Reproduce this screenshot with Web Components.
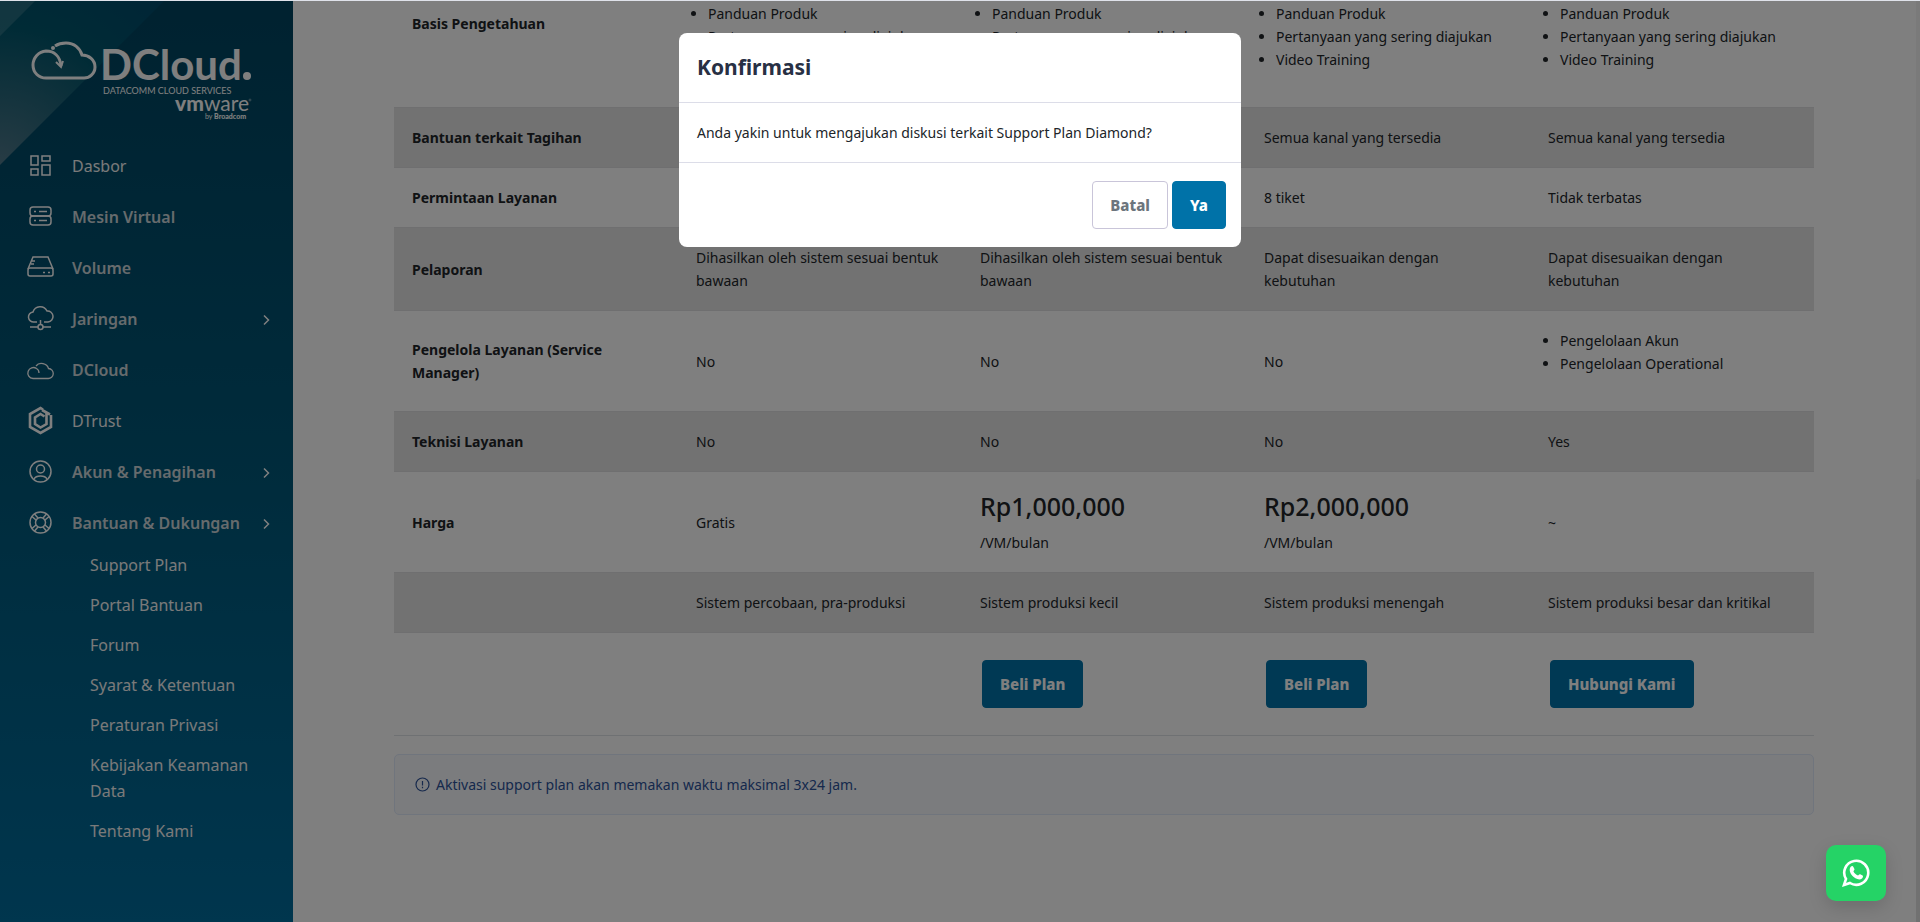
<!DOCTYPE html>
<html lang="id">
<head>
<meta charset="utf-8">
<title>Support Plan - DCloud</title>
<style>
	body{
		margin: 0;
		font: 14px/23px "Noto Sans", "Open Sans", sans-serif;
		color: #212529;
		background: #fff;
		--primary: #0072a8;
	}
</style>
</head>
<body>

<app-shell>
	<side-nav slot="nav">
		<nav-item icon="grid" plain>Dasbor</nav-item>
		<nav-item icon="server">Mesin Virtual</nav-item>
		<nav-item icon="drive">Volume</nav-item>
		<nav-item icon="network" arrow>Jaringan</nav-item>
		<nav-item icon="cloud">DCloud</nav-item>
		<nav-item icon="trust" plain>DTrust</nav-item>
		<nav-item icon="user" arrow>Akun &amp; Penagihan</nav-item>
		<nav-item icon="help" arrow>Bantuan &amp; Dukungan</nav-item>
		<nav-sub>Support Plan</nav-sub>
		<nav-sub>Portal Bantuan</nav-sub>
		<nav-sub>Forum</nav-sub>
		<nav-sub>Syarat &amp; Ketentuan</nav-sub>
		<nav-sub>Peraturan Privasi</nav-sub>
		<nav-sub>Kebijakan Keamanan Data</nav-sub>
		<nav-sub>Tentang Kami</nav-sub>
	</side-nav>
	<plan-table></plan-table>
	<info-note>Aktivasi support plan akan memakan waktu maksimal 3x24 jam.</info-note>
</app-shell>

<confirm-modal>
	<span slot="title">Konfirmasi</span>
	Anda yakin untuk mengajukan diskusi terkait Support Plan Diamond?
	<action-button slot="actions" outline>Batal</action-button>
	<action-button slot="actions">Ya</action-button>
</confirm-modal>

<wa-button></wa-button>

<script>
const icons = {
	grid: '<path d="M5 5h7v9H5zM16 5h8v5h-8zM16 14h8v10h-8zM5 18h7v6H5z"/>',
	server: '<rect x="4" y="5" width="21" height="9" rx="3"/><rect x="4" y="14" width="21" height="9" rx="3"/><path d="M8 9.500h2M13 9.500h8M8 18.500h2M13 18.500h8"/>',
	drive: '<path d="M2 16 7 4h15l5 12M9 8H6M8 11H5"/><rect x="2" y="15" width="25" height="8" rx="2"/><path d="M17 19.500h2M22 19.500h2"/>',
	network: '<path d="M11 18H8a5 5 0 0 1-1-10 7.500 7.500 0 0 1 14-1 5.500 5.500 0 0 1 1 11h-4M14.500 16v4M4 23h8M17 23h8"/><circle cx="14.500" cy="23" r="2.500"/>',
	cloud: '<path stroke-width="1.300" d="M10 11c3.500-4.500 11-2.500 12.500 2.500a5 5 0 0 1-.5 10H7a5.500 5.500 0 1 1 3.500-10c1.500.8 2.500 2 2.500 4.500"/>',
	trust: '<path stroke-width="2.600" d="M17 3.500 14.500 2 4 8v13l10.500 6L25 21V9"/><path stroke-width="2.600" d="M18.500 10.500 14.500 8 9 11.500v6.500l5.500 3.500 6-3.500V7.500M16 4l8 4.500"/>',
	user: '<circle cx="14.500" cy="14.500" r="10.500"/><circle cx="14.500" cy="12" r="4"/><path d="M8 22c2-4 11-4 13 0"/>',
	help: '<circle cx="14.500" cy="14.500" r="10.500"/><circle cx="14.500" cy="14.500" r="5"/><path d="M6 8.500l4 3.500M8.500 6l3.500 4M23 8.500 19 12M20.500 6 17 10M6 20.500l4-3.500M8.500 23l3.500-4M23 20.500 19 17M20.500 23 17 19"/>'
};

class AppShell extends HTMLElement{
	constructor(){
		super();
		this.attachShadow({mode: 'open'});
		this.shadowRoot.innerHTML = `
			<style>
				:host{
					display: flex;
					height: 100vh;
					overflow: hidden;
				}
				main{
					flex: 1;
					min-width: 0;
					padding: 0 102px 0 101px;
				}
				.track{
					display: flex;
					flex-direction: column;
					width: 4px;
					background: #f5f5f5;
				}
				.thumb{
					flex: 1;
					margin-top: 52vh;
					border-radius: 2px 2px 0 0;
					background: #e2e2e2;
				}
			</style>
			<slot name="nav"></slot>
			<main><slot></slot></main>
			<div class="track"><div class="thumb"></div></div>
		`;
	}
}

class SideNav extends HTMLElement{
	constructor(){
		super();
		this.attachShadow({mode: 'open'});
		this.shadowRoot.innerHTML = `
			<style>
				:host{
					position: relative;
					z-index: 0;
					display: block;
					flex: none;
					width: 293px;
					font-size: 16px;
					line-height: 26px;
					color: #fff;
					background: linear-gradient(180deg, #004460, #005778 50%, #006c9c);
				}
				/* light wedge in the corner behind the logo */
				:host::before{
					content: "";
					position: absolute;
					z-index: -1;
					top: 0;
					left: 0;
					width: 165px;
					height: 165px;
					clip-path: polygon(0 0, 100% 0, 0 100%);
					background:
						linear-gradient(135deg, rgba(255,255,255,.14) 25px, transparent 26px),
						radial-gradient(circle at 0 165px, #50788a, #00566c 60%, #004a6c);
				}
				.logo{
					display: block;
					width: 225px;
					height: 104px;
					padding: 33px 0 0 30px;
				}
				nav{
					display: flex;
					flex-direction: column;
					padding-top: 7px;
				}
			</style>
			<svg class="logo" viewBox="0 0 225 104" fill="#fff" font-family="Lato, sans-serif" role="img" aria-label="DCloud">
				<g fill="none" stroke="#fff" stroke-width="3">
					<path d="M31 33c-1-10-7-15-15-15a14 14 0 0 0-13 14c0 8 6 13 13 13h37a11 11 0 0 0 12-11c0-7-6-12-13-12-2-7-8-12-16-12-5 0-8 1-11 3"/>
					<path stroke-width="2" d="m26 29 5 5 2-6"/>
				</g>
				<circle cx="23" cy="15" r="2"/>
				<text x="70" y="47" font-size="42" font-weight="700">DCloud</text>
				<circle cx="217" cy="43" r="4"/>
				<text x="73" y="61" font-size="9">DATACOMM CLOUD SERVICES</text>
				<text x="145" y="78" font-size="21" font-weight="900">vm<tspan font-weight="400">ware</tspan></text>
				<circle cx="220" cy="67" r="1" fill="none" stroke="#fff" stroke-width=".4"/>
				<text x="175" y="86" font-size="7">by <tspan font-weight="900">Broadcom</tspan></text>
			</svg>
			<nav><slot></slot></nav>
		`;
	}
}

class NavItem extends HTMLElement{
	constructor(){
		super();
		this.attachShadow({mode: 'open'});
		this.shadowRoot.innerHTML = `
			<style>
				:host{
					display: block;
					margin-bottom: 8px;
				}
				:host([icon="help"]){
					margin-bottom: 1px;
				}
				a{
					display: flex;
					align-items: center;
					height: 43px;
					padding: 0 20px 0 26px;
					color: #cdd6da;
					font-weight: 600;
					text-decoration: none;
				}
				:host([plain]) a{
					color: #f4f4f4;
					font-weight: 400;
				}
				svg{
					flex: none;
					fill: none;
					stroke: #fff;
					stroke-width: 1.500;
				}
				span{
					flex: 1;
					padding-left: 17px;
				}
			</style>
			<a href="#">
				<svg width="29" height="29" viewBox="0 0 29 29">${icons[this.getAttribute('icon')]}</svg>
				<span><slot></slot></span>
				${this.hasAttribute('arrow') ? '<svg width="14" height="14" viewBox="0 0 14 14"><path d="m5 3.500 4.500 4.500L5 12.500"/></svg>' : ''}
			</a>
		`;
	}
}

class NavSub extends HTMLElement{
	constructor(){
		super();
		this.attachShadow({mode: 'open'});
		this.shadowRoot.innerHTML = `
			<style>
				:host{ display: block; }
				a{
					display: block;
					padding: 7px 36px 7px 90px;
					color: #f4f4f4;
					text-decoration: none;
				}
			</style>
			<a href="#"><slot></slot></a>
		`;
	}
}

class ActionButton extends HTMLElement{
	constructor(){
		super();
		this.attachShadow({mode: 'open'});
		this.shadowRoot.innerHTML = `
			<style>
				:host{ display: inline-block; }
				button{
					display: block;
					height: 48px;
					padding: 0 17px;
					border: 1px solid var(--primary);
					border-radius: 4px;
					background: var(--primary);
					color: #fff;
					font: 800 15px/23px "Noto Sans", "Open Sans", sans-serif;
				}
				:host([outline]) button{
					border-color: #c9c5d9;
					background: #fff;
					color: #6c757d;
				}
			</style>
			<button type="button"><slot></slot></button>
		`;
	}
}

class PlanTable extends HTMLElement{
	constructor(){
		super();
		const guides = '<ul><li>Panduan Produk</li><li>Pertanyaan yang sering diajukan</li><li>Video Training</li></ul>';
		this.attachShadow({mode: 'open'});
		this.shadowRoot.innerHTML = `
			<style>
				:host{ display: block; }
				table{
					width: 100%;
					table-layout: fixed;
					border-collapse: separate;
					border-spacing: 0;
					border-bottom: 1px solid #dee2e6;
				}
				th, td{
					padding: 18px;
					text-align: left;
					vertical-align: middle;
				}
				th{ font-weight: 700; }
				.stripe > *{
					background: #e5e5e5;
					border: solid #dedfe0;
					border-width: 1px 0;
				}
				/* first row is scrolled partly out of view */
				.cut > *{
					padding-top: 2px;
					vertical-align: top;
				}
				.cut > th{ padding-top: 12px; }
				ul{
					margin: 0 0 18px;
					padding-left: 12px;
				}
				h3{
					margin: 0 0 8px;
					font-size: 25px;
					line-height: 33px;
					font-weight: 500;
				}
				p{ margin: 0; }
				action-button{ margin: 9px 2px; vertical-align: top; }
			</style>
			<table>
				<tbody>
					<tr class="cut"><th scope="row">Basis Pengetahuan</th><td>${guides}</td><td>${guides}</td><td>${guides}</td><td>${guides}</td></tr>
					<tr class="stripe"><th scope="row">Bantuan terkait Tagihan</th><td></td><td></td><td>Semua kanal yang tersedia</td><td>Semua kanal yang tersedia</td></tr>
					<tr><th scope="row">Permintaan Layanan</th><td></td><td></td><td>8 tiket</td><td>Tidak terbatas</td></tr>
					<tr class="stripe"><th scope="row">Pelaporan</th><td>Dihasilkan oleh sistem sesuai bentuk bawaan</td><td>Dihasilkan oleh sistem sesuai bentuk bawaan</td><td>Dapat disesuaikan dengan kebutuhan</td><td>Dapat disesuaikan dengan kebutuhan</td></tr>
					<tr><th scope="row">Pengelola Layanan (Service Manager)</th><td>No</td><td>No</td><td>No</td><td><ul><li>Pengelolaan Akun</li><li>Pengelolaan Operational</li></ul></td></tr>
					<tr class="stripe"><th scope="row">Teknisi Layanan</th><td>No</td><td>No</td><td>No</td><td>Yes</td></tr>
					<tr><th scope="row">Harga</th><td>Gratis</td><td><h3>Rp1,000,000</h3><p>/VM/bulan</p></td><td><h3>Rp2,000,000</h3><p>/VM/bulan</p></td><td>~</td></tr>
					<tr class="stripe"><th></th><td>Sistem percobaan, pra-produksi</td><td>Sistem produksi kecil</td><td>Sistem produksi menengah</td><td>Sistem produksi besar dan kritikal</td></tr>
					<tr><th></th><td></td><td><action-button>Beli Plan</action-button></td><td><action-button>Beli Plan</action-button></td><td><action-button>Hubungi Kami</action-button></td></tr>
				</tbody>
			</table>
		`;
	}
}

class InfoNote extends HTMLElement{
	constructor(){
		super();
		this.attachShadow({mode: 'open'});
		this.shadowRoot.innerHTML = `
			<style>
				:host{
					display: flex;
					align-items: center;
					gap: 6px;
					margin-top: 18px;
					padding: 18px 20px;
					border: 1px solid #e0eafa;
					border-radius: 5px;
					background: #f6f8fc;
					color: #2c5299;
				}
			</style>
			<svg width="15" height="15" viewBox="0 0 15 15" fill="none" stroke="currentColor" stroke-width="1.200">
				<circle cx="7.500" cy="7.500" r="6.500"/><path d="M7.500 4v4.500M7.500 9.800v1.400"/>
			</svg>
			<span><slot></slot></span>
		`;
	}
}

class ConfirmModal extends HTMLElement{
	constructor(){
		super();
		this.attachShadow({mode: 'open'});
		this.shadowRoot.innerHTML = `
			<style>
				:host{
					position: fixed;
					inset: 0;
					display: flex;
					align-items: flex-start;
					justify-content: center;
					padding-top: 32px;
					border-top: 1px solid #dfe2ea;
					background: rgba(0,0,0,.5);
					background-clip: padding-box;
				}
				.dialog{
					width: 100%;
					max-width: 562px;
					border-radius: 8px;
					background: #fff;
				}
				h2{
					margin: 0;
					padding: 18px;
					font-size: 21px;
					line-height: 33px;
					font-weight: 700;
					color: #283044;
				}
				.body{
					padding: 18px;
					border: solid #dcdde8;
					border-width: 1px 0;
				}
				.footer{
					display: flex;
					justify-content: flex-end;
					gap: 4px;
					padding: 18px 15px;
				}
			</style>
			<div class="dialog" role="dialog" aria-modal="true" aria-labelledby="title">
				<h2 id="title"><slot name="title"></slot></h2>
				<div class="body"><slot></slot></div>
				<div class="footer"><slot name="actions"></slot></div>
			</div>
		`;
	}
}

class WaButton extends HTMLElement{
	constructor(){
		super();
		this.attachShadow({mode: 'open'});
		this.shadowRoot.innerHTML = `
			<style>
				:host{
					position: fixed;
					right: 34px;
					bottom: 21px;
				}
				a{
					display: flex;
					align-items: center;
					justify-content: center;
					width: 60px;
					height: 56px;
					border-radius: 10px;
					background: #25d366;
					box-shadow: 0 6px 18px rgba(0,0,0,.15);
				}
			</style>
			<a href="#" aria-label="WhatsApp">
				<svg width="28" height="28" viewBox="0 0 28 28">
					<path d="M2 26l2-6a12 12 0 1 1 4 4z" fill="none" stroke="#fff" stroke-width="2.600"/>
					<path d="M9 7.500c1-1 2-.6 2.400.4l1 2.200c.3.700-.2 1.300-1 2.200 1 2 2.400 3.400 4.600 4.300.8-.8 1.300-1.700 2.200-1.300l2.400 1.200c.8.500.3 2.300-.6 3-3 2.400-7.600-.5-9.700-2.800C8.200 14.400 6.400 10.300 9 7.500z" fill="#fff"/>
				</svg>
			</a>
		`;
	}
}

customElements.define('app-shell', AppShell);
customElements.define('side-nav', SideNav);
customElements.define('nav-item', NavItem);
customElements.define('nav-sub', NavSub);
customElements.define('action-button', ActionButton);
customElements.define('plan-table', PlanTable);
customElements.define('info-note', InfoNote);
customElements.define('confirm-modal', ConfirmModal);
customElements.define('wa-button', WaButton);
</script>
</body>
</html>
